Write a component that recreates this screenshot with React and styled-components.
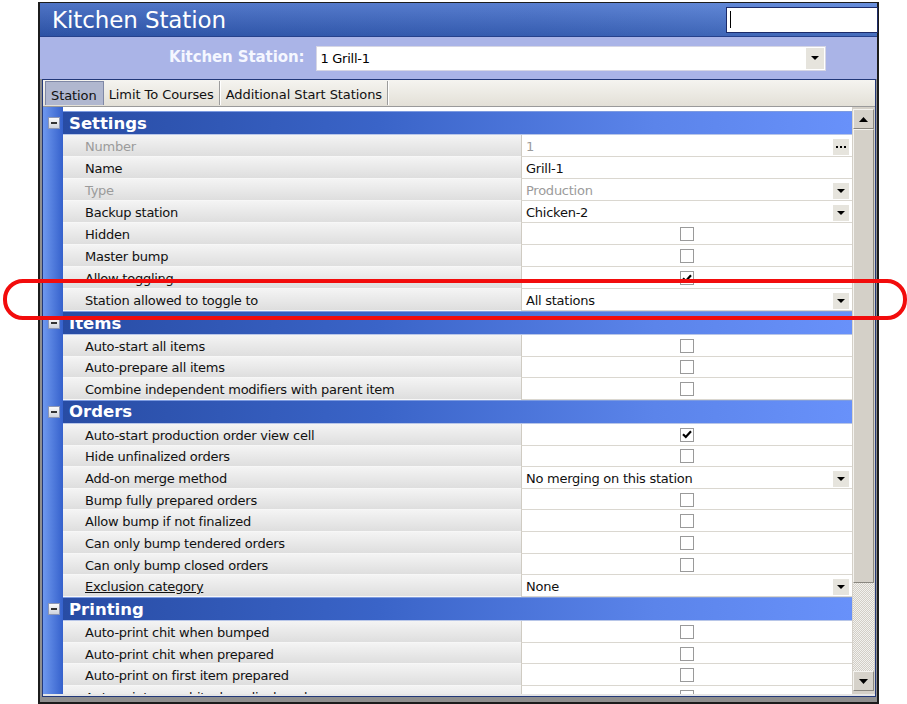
import React from 'react';
import styled, { createGlobalStyle } from 'styled-components';

const GlobalStyle = createGlobalStyle`
  html, body {
    margin: 0;
    padding: 0;
    background: #fff;
  }
  body {
    font-family: "DejaVu Sans", Verdana, sans-serif;
  }
`;

const Page = styled.div`
  position: relative;
  width: 907px;
  height: 704px;
  overflow: hidden;
  box-sizing: border-box;
  padding: 2px 0 0 38px;
`;

const Window = styled.div`
  width: 841px;
  height: 702px;
  box-sizing: border-box;
  border: 2px solid #1c1c1c;
  border-top-width: 1px;
  background: #8f8f8f;
  display: flex;
  flex-direction: column;
`;

const TitleBar = styled.div`
  height: 34px;
  flex: none;
  box-sizing: border-box;
  display: flex;
  align-items: center;
  justify-content: space-between;
  padding-left: 12px;
  background: linear-gradient(180deg, rgba(255,255,255,0.14), rgba(0,0,0,0.12)),
    linear-gradient(90deg, #325dbb 0%, #3d69c8 60%, #4f7cd6 100%);
  border-bottom: 1px solid #26418c;
`;

const Title = styled.h1`
  margin: 0;
  font-size: 23px;
  font-weight: normal;
  color: #fff;
  letter-spacing: -0.1px;
`;

const SearchBox = styled.div`
  width: 152px;
  height: 26px;
  box-sizing: border-box;
  margin-right: -1px;
  background: #fff;
  border: 1px solid #1b2a68;
  display: flex;
  align-items: center;
  padding-left: 3px;
`;

const Caret = styled.span`
  width: 1px;
  height: 17px;
  background: #000;
`;

const Band = styled.div`
  height: 42px;
  flex: none;
  box-sizing: border-box;
  display: flex;
  align-items: center;
  gap: 12px;
  padding-left: 129px;
  background: #aab4e7;
`;

const BandLabel = styled.span`
  font-size: 15px;
  font-weight: bold;
  color: #f5f7ff;
  letter-spacing: -0.1px;
  margin-bottom: 3px;
`;

const Select = styled.div`
  width: 510px;
  height: 25px;
  box-sizing: border-box;
  display: flex;
  align-items: center;
  background: #fff;
  border: 1px solid #d6d6e4;
  padding-left: 3px;
  font-size: 13px;
  letter-spacing: -0.25px;
`;

const DropButton = styled.span`
  margin-left: auto;
  width: ${p => p.$w || 16}px;
  height: ${p => p.$h || 16}px;
  margin-right: ${p => p.$mr || 3}px;
  background: #e6e4dd;
  display: flex;
  align-items: center;
  justify-content: center;
  flex: none;
`;

const Panel = styled.div`
  flex: 1;
  min-height: 0;
  margin: 0 1px 5px 2px;
  border: 1px solid #223879;
  display: flex;
  flex-direction: column;
  background: #fff;
`;

const TabStrip = styled.div`
  height: 27px;
  flex: none;
  box-sizing: border-box;
  display: flex;
  align-items: flex-end;
  padding-left: 2px;
  background: linear-gradient(180deg, #f5f4f0, #e3e0d7);
  border-bottom: 1px solid #9a9a9a;
`;

const Tab = styled.div`
  height: 24px;
  box-sizing: border-box;
  display: flex;
  align-items: center;
  padding: 3px 6px 0 5px;
  font-size: 13px;
  letter-spacing: -0.08px;
  color: #111;
  background: ${p => (p.$active ? '#b0b7cf' : 'transparent')};
  border: ${p => (p.$active ? '1px solid #7f88a6' : 'none')};
  border-bottom: none;
  box-shadow: ${p => (p.$active ? 'none' : 'inset -1px 0 0 #fff, inset -2px 0 0 #9c9c9c')};
  margin-bottom: 1px;
  padding-right: ${p => (p.$active ? 6 : 7)}px;
`;

const Grid = styled.div`
  flex: 1;
  min-height: 0;
  display: flex;
  border-bottom: 2px solid #e6e6e6;
`;

const Body = styled.div`
  flex: 1;
  min-width: 0;
  overflow: hidden;
  display: flex;
  flex-direction: column;
  padding-top: 4px;
  background: linear-gradient(90deg, #6e98ee 0, #3561cc 20px, #fff 20px);
`;

const SectionRow = styled.div`
  display: grid;
  grid-template-columns: 20px 1fr;
  height: 24px;
  flex: none;
`;

const Gutter = styled.div`
  background: linear-gradient(90deg, #6e98ee, #3561cc);
  display: flex;
  align-items: center;
`;

const Toggle = styled.span`
  width: 12px;
  height: 12px;
  box-sizing: border-box;
  margin-left: 5px;
  border: 1px solid #8c96b4;
  background: linear-gradient(180deg, #fbfbfb, #cfd3dc);
  display: flex;
  align-items: center;
  justify-content: center;

  &::after {
    content: '';
    width: 6px;
    height: 2px;
    background: #333;
  }
`;

const SectionBar = styled.div`
  display: flex;
  align-items: center;
  padding-left: 6px;
  font-size: 16.5px;
  font-weight: bold;
  color: #fff;
  background: linear-gradient(90deg, #284ca4 0%, #3a64c8 40%, #5b84ea 75%, #6891fa 100%);
  border-top: 1px solid #7d9be0;
  border-bottom: 1px solid #b8c6e8;
  box-sizing: border-box;
`;

const Row = styled.div`
  display: grid;
  grid-template-columns: 20px 458px 1fr;
  height: ${p => p.$h}px;
  flex: none;
`;

const Label = styled.div`
  display: flex;
  align-items: center;
  padding: 2px 0 0 22px;
  box-sizing: border-box;
  font-size: 13px;
  letter-spacing: -0.25px;
  white-space: nowrap;
  color: ${p => (p.$disabled ? '#9b9b9b' : '#111')};
  text-decoration: ${p => (p.$link ? 'underline' : 'none')};
  background: linear-gradient(180deg, #f4f4f4, #dedede);
  border-bottom: 1px solid #f7f7f7;
`;

const Value = styled.div`
  display: flex;
  align-items: center;
  justify-content: ${p => (p.$center ? 'center' : 'flex-start')};
  padding: ${p => (p.$center ? '1px 0 0 0' : '2px 0 0 4px')};
  box-sizing: border-box;
  font-size: 13px;
  letter-spacing: -0.25px;
  white-space: nowrap;
  color: ${p => (p.$disabled ? '#9b9b9b' : '#111')};
  background: #fff;
  border-left: 1px solid #cfcbc2;
  border-bottom: 1px solid #dad7d0;
`;

const CheckBox = styled.span`
  width: 14px;
  height: 14px;
  box-sizing: border-box;
  border: 1px solid #9a9a9a;
  background: #fff;
  display: flex;
  align-items: center;
  justify-content: center;
`;

const ScrollBar = styled.div`
  width: 23px;
  flex: none;
  box-sizing: border-box;
  display: flex;
  flex-direction: column;
  padding: 2px 1px 3px 1px;
  background: #d4d0c8;
`;

const ScrollButton = styled.div`
  height: 20px;
  flex: none;
  box-sizing: border-box;
  display: flex;
  align-items: center;
  justify-content: center;
  background: #d6d2ca;
  border: 1px solid;
  border-color: #f4f3ef #8a8780 #8a8780 #f4f3ef;
`;

const Thumb = styled.div`
  height: 454px;
  flex: none;
  box-sizing: border-box;
  background: #d4d0c8;
  border: 1px solid;
  border-color: #f4f3ef #8a8780 #8a8780 #f4f3ef;
`;

const Track = styled.div`
  flex: 1;
  background-color: #fff;
  background-image: repeating-conic-gradient(#d2cec6 0 25%, #f2f1ee 0 50%);
  background-size: 2px 2px;
`;

const Highlight = styled.div`
  position: absolute;
  left: 3px;
  top: 279px;
  width: 904px;
  height: 41px;
  box-sizing: border-box;
  border: 4px solid #f20c0c;
  border-radius: 20px;
  pointer-events: none;
`;

const Dots = styled.span`
  display: flex;
  gap: 2px;

  & > i {
    width: 2px;
    height: 2px;
    background: #000;
  }
`;

const Arrow = ({ up, w = 8, h = 4 }) => (
  <svg width={w} height={h} viewBox={`0 0 ${w} ${h}`}>
    <path d={up ? `M0 ${h} L${w / 2} 0 L${w} ${h}Z` : `M0 0 L${w} 0 L${w / 2} ${h}Z`} fill="#000" />
  </svg>
);

const Tick = () => (
  <svg width="10" height="9" viewBox="0 0 10 9">
    <path d="M1 4.3 L3.8 7 L9 1.3" stroke="#000" strokeWidth="2.2" fill="none" />
  </svg>
);

// rows in the first group sit a touch taller than the rest
const sections = [
  {
    title: 'Settings',
    rowHeight: 22,
    rows: [
      { label: 'Number', disabled: true, kind: 'more', value: '1' },
      { label: 'Name', kind: 'text', value: 'Grill-1' },
      { label: 'Type', disabled: true, kind: 'select', value: 'Production' },
      { label: 'Backup station', kind: 'select', value: 'Chicken-2' },
      { label: 'Hidden', kind: 'check' },
      { label: 'Master bump', kind: 'check' },
      { label: 'Allow toggling', kind: 'check', checked: true },
      { label: 'Station allowed to toggle to', kind: 'select', value: 'All stations' },
    ],
  },
  {
    title: 'Items',
    rowHeight: 21.65,
    rows: [
      { label: 'Auto-start all items', kind: 'check' },
      { label: 'Auto-prepare all items', kind: 'check' },
      { label: 'Combine independent modifiers with parent item', kind: 'check' },
    ],
  },
  {
    title: 'Orders',
    rowHeight: 21.65,
    rows: [
      { label: 'Auto-start production order view cell', kind: 'check', checked: true },
      { label: 'Hide unfinalized orders', kind: 'check' },
      { label: 'Add-on merge method', kind: 'select', value: 'No merging on this station' },
      { label: 'Bump fully prepared orders', kind: 'check' },
      { label: 'Allow bump if not finalized', kind: 'check' },
      { label: 'Can only bump tendered orders', kind: 'check' },
      { label: 'Can only bump closed orders', kind: 'check' },
      { label: 'Exclusion category', link: true, kind: 'select', value: 'None' },
    ],
  },
  {
    title: 'Printing',
    rowHeight: 21.65,
    rows: [
      { label: 'Auto-print chit when bumped', kind: 'check' },
      { label: 'Auto-print chit when prepared', kind: 'check' },
      { label: 'Auto-print on first item prepared', kind: 'check' },
      { label: 'Auto-print new chit when displayed', kind: 'check' },
    ],
  },
];

function PropertyValue({ row }) {
  if (row.kind === 'check') {
    return (
      <Value $center>
        <CheckBox>{row.checked && <Tick />}</CheckBox>
      </Value>
    );
  }
  return (
    <Value $disabled={row.disabled}>
      {row.value}
      {row.kind === 'select' && (
        <DropButton>
          <Arrow />
        </DropButton>
      )}
      {row.kind === 'more' && (
        <DropButton>
          <Dots><i /><i /><i /></Dots>
        </DropButton>
      )}
    </Value>
  );
}

export default function App() {
  return (
    <Page>
      <GlobalStyle />
      <Window>
        <TitleBar>
          <Title>Kitchen Station</Title>
          <SearchBox>
            <Caret />
          </SearchBox>
        </TitleBar>
        <Band>
          <BandLabel>Kitchen Station:</BandLabel>
          <Select>
            1 Grill-1
            <DropButton $w={18} $h={21} $mr={1}>
              <Arrow />
            </DropButton>
          </Select>
        </Band>
        <Panel>
          <TabStrip>
            <Tab $active>Station</Tab>
            <Tab>Limit To Courses</Tab>
            <Tab>Additional Start Stations</Tab>
          </TabStrip>
          <Grid>
            <Body>
              {sections.map(section => (
                <React.Fragment key={section.title}>
                  <SectionRow>
                    <Gutter>
                      <Toggle />
                    </Gutter>
                    <SectionBar>{section.title}</SectionBar>
                  </SectionRow>
                  {section.rows.map(row => (
                    <Row key={row.label} $h={section.rowHeight}>
                      <Gutter />
                      <Label $disabled={row.disabled} $link={row.link}>
                        {row.label}
                      </Label>
                      <PropertyValue row={row} />
                    </Row>
                  ))}
                </React.Fragment>
              ))}
            </Body>
            <ScrollBar>
              <ScrollButton>
                <Arrow up w={9} h={5} />
              </ScrollButton>
              <Thumb />
              <Track />
              <ScrollButton>
                <Arrow w={9} h={5} />
              </ScrollButton>
            </ScrollBar>
          </Grid>
        </Panel>
      </Window>
      <Highlight />
    </Page>
  );
}
